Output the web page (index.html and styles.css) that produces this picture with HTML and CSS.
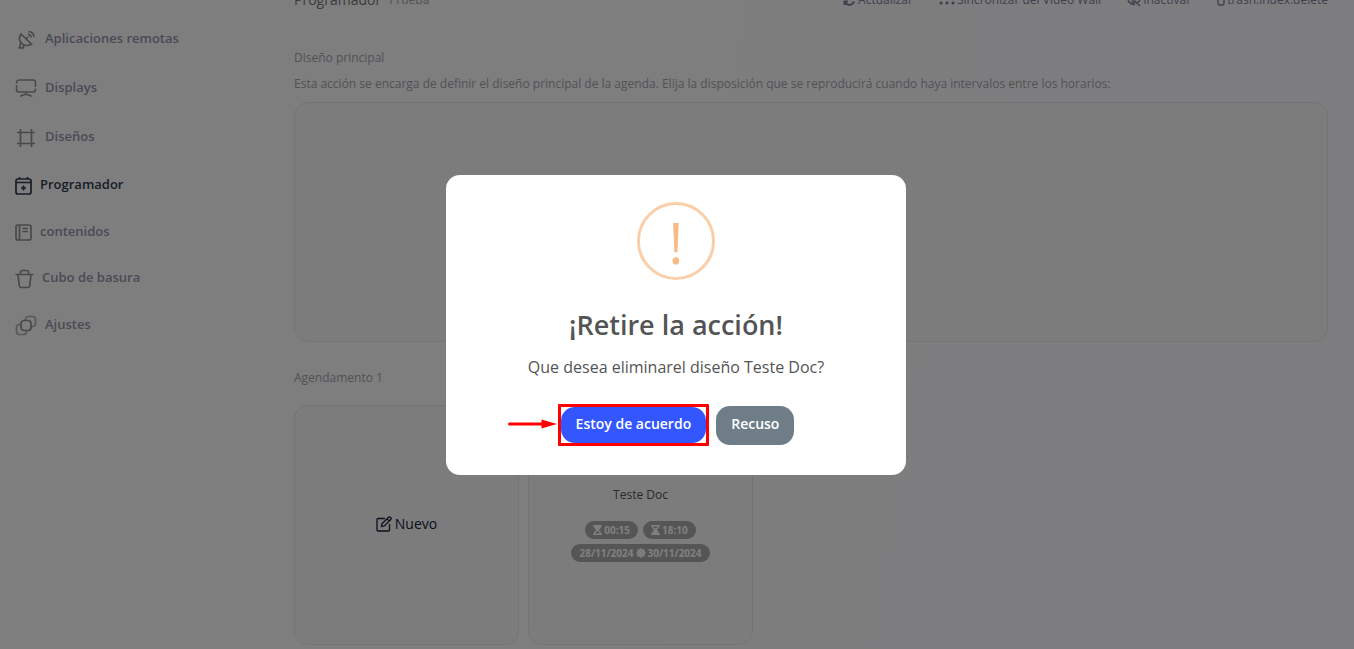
FILE: index.html
```html
<!DOCTYPE html>
<html lang="es">

<head>
  <meta charset="UTF-8" />
  <meta name="viewport" content="width=device-width, initial-scale=1.0" />
  <title>Programador</title>
  <link rel="stylesheet" href="styles.css">
</head>

<body>
  <div class="layout">
    <!-- sidebar -->
    <nav class="sidebar">
      <ul>
        <li class="item" aria-hidden="true">
          <svg class="icon" width="22" height="22" viewBox="0 0 22 22"><rect x="2" y="2" width="5" height="6" rx="1" /><rect x="11" y="2" width="5" height="6" rx="1" /><rect x="2" y="12" width="5" height="6" rx="1" /><rect x="11" y="12" width="5" height="6" rx="1" /></svg>
        </li>
        <li class="item">
          <a href="#">
            <svg class="icon" width="22" height="22" viewBox="0 0 22 22"><path d="M6 5C4 8 4 11.500 6.300 14s6.500 3.200 10.200 1.200zM11 10l2-2.200M5.800 13.500L4.500 18.500M3.500 18.800H9M8.500 16v2.500M13 5.300c1.700.2 2.900 1.500 3.200 3.200M13.500 2.500c3 .2 5.200 2.400 5.500 5.500" /></svg>
            Aplicaciones remotas
          </a>
        </li>
        <li class="item">
          <a href="#">
            <svg class="icon thin" width="22" height="22" viewBox="0 0 22 22"><path d="M1.500 5.500V4.500a2.500 2.500 0 0 1 2.500-2.500h14A2.500 2.500 0 0 1 20.500 4.500v4.500M20.500 10.500v1a2.500 2.500 0 0 1-2.500 2.500H4A2.500 2.500 0 0 1 1.500 11.500V7M11 14v2M5 18.500c1.500-1.200 3.500-1.800 6-2.300 2.500.5 4.500 1.100 6 2.300" /></svg>
            Displays
          </a>
        </li>
        <li class="item">
          <a href="#">
            <svg class="icon" width="22" height="22" viewBox="0 0 22 22"><path d="M5.500 2v18M16.500 2v18M2 5.500h18M2 16.500h18" /></svg>
            Diseños
          </a>
        </li>
        <li class="item small active">
          <a href="#">
            <svg class="icon" width="17" height="19" viewBox="0 0 17 19"><rect x="1" y="3" width="15" height="15" rx="2" /><path d="M1 6.500h15M4.500 1v2M12.500 1v2M8.500 9.500v5M6 12h5" /></svg>
            Programador
          </a>
        </li>
        <li class="item small">
          <a href="#">
            <svg class="icon" width="17" height="17" viewBox="0 0 17 17"><rect x="1" y="1" width="15" height="15" rx="2" /><path d="M4.500 1v15M7.500 4.500H13M7.500 7.500H13" /></svg>
            contenidos
          </a>
        </li>
        <li class="item medium">
          <a href="#">
            <svg class="icon" width="19" height="20" viewBox="0 0 19 20"><path d="M.5 5.500h18M3 5.500l1.300 11.300A2 2 0 0 0 6.300 18.500h6.400a2 2 0 0 0 2-1.700L16 5.500M5.500 5.500V3.200A1.700 1.700 0 0 1 7.200 1.500h4.600a1.700 1.700 0 0 1 1.700 1.700v2.300" /></svg>
            Cubo de basura
          </a>
        </li>
        <li class="item">
          <a href="#">
            <svg class="icon" width="22" height="22" viewBox="0 0 22 22"><rect x="6" y="5.500" width="10" height="10" rx="3" /><path class="faint" d="M10.500 5.500V4.500a3 3 0 0 1 3-3h4a3 3 0 0 1 3 3v4a3 3 0 0 1-3 3H16M6 9.500H4.500a3 3 0 0 0-3 3v4a3 3 0 0 0 3 3h4a3 3 0 0 0 3-3v-1" /></svg>
            Ajustes
          </a>
        </li>
      </ul>
    </nav>

    <!-- content -->
    <main class="main">
      <header class="topbar">
        <h1>Programador</h1>
        <span class="crumb">Prueba</span>
        <div class="actions">
          <a href="#">
            <svg class="bold" width="13" height="13" viewBox="0 0 13 13"><path d="M11.500 1.500v3.500H8M1.500 11V7.500H5M2 5a5 5 0 0 1 9-1M11 7.500a5 5 0 0 1-9 1" /></svg>
            Actualizar
          </a>
          <a href="#">
            <svg class="solid" width="16" height="13" viewBox="0 0 16 13"><circle cx="2" cy="9" r="1.600" /><circle cx="8" cy="9" r="1.600" /><circle cx="14" cy="9" r="1.600" /><circle cx="8" cy="3" r="1.600" /></svg>
            Sincronizar del Video Wall
          </a>
          <a href="#">
            <svg width="14" height="13" viewBox="0 0 14 13"><path d="M1 6.500C3 3.500 5 2.500 7 2.500s4 1 6 4M1 6.500c2 3 4 4.300 7 4M5 6.500a2 2 0 0 0 3 2M1.500 1l11.500 11M10 9l3-2.500" /></svg>
            Inactivar
          </a>
          <a href="#">
            <svg width="8" height="13" viewBox="0 0 8 13"><path d="M1 3v6.500a1.500 1.500 0 0 0 1.500 1.500h3A1.500 1.500 0 0 0 7 9.500V3" /></svg>
            trash.index.delete
          </a>
        </div>
      </header>

      <section class="section">
        <h2>Diseño principal</h2>
        <p class="desc">Esta acción se encarga de definir el diseño principal de la agenda. Elija la disposición que se reproducirá cuando haya intervalos entre los horarios:</p>
        <div class="card"></div>
      </section>

      <section class="section agenda">
        <h2>Agendamento 1</h2>
        <div class="cards">
          <div class="card new">
            <a href="#">
              <svg width="16" height="16" viewBox="0 0 16 16"><path d="M9 2.500H2A1 1 0 0 0 1 3.500V14a1 1 0 0 0 1 1h10.500a1 1 0 0 0 1-1V8M5.500 10.500l.5-2.800 6.500-6.500a1.200 1.200 0 0 1 1.700 0l.6.6a1.200 1.200 0 0 1 0 1.700L8.300 10zM11 2.800l2.300 2.300" /></svg>
              Nuevo
            </a>
          </div>
          <div class="card layout-card">
            <h3>Teste Doc</h3>
            <div class="badges">
              <span class="badge">
                <svg width="9" height="10" viewBox="0 0 9 10"><path d="M0 0h9v1.500H8C8 3.500 6.500 4.300 5.500 5 6.500 5.700 8 6.500 8 8.500h1V10H0V8.500h1C1 6.500 2.500 5.700 3.500 5 2.500 4.300 1 3.500 1 1.500H0z" /><path class="sand" d="M4.500 6C3.500 6.600 2.600 7.300 2.400 8.500h4.200C6.400 7.300 5.500 6.600 4.500 6z" /></svg>
                00:15
              </span>
              <span class="badge">
                <svg width="9" height="10" viewBox="0 0 9 10"><path d="M0 0h9v1.500H8C8 3.500 6.500 4.300 5.500 5 6.500 5.700 8 6.500 8 8.500h1V10H0V8.500h1C1 6.500 2.500 5.700 3.500 5 2.500 4.300 1 3.500 1 1.500H0z" /><path class="sand" d="M2.400 1.500C2.500 2.500 3 3 3.300 3.300h2.400C6 3 6.500 2.500 6.600 1.500z" /></svg>
                18:10
              </span>
              <span class="badge">
                28/11/2024
                <svg width="10" height="10" viewBox="0 0 10 10"><g fill="none" stroke="#fff"><circle cx="5" cy="5" r="3.200" stroke-width="1.500" /><path d="M5 0v10M0 5h10M1.500 1.500l7 7M8.500 1.500l-7 7" stroke-width="1.200" /></g></svg>
                30/11/2024
              </span>
            </div>
          </div>
        </div>
      </section>
    </main>
  </div>

  <!-- confirm dialog -->
  <div class="overlay">
    <div class="modal" role="dialog" aria-modal="true" aria-labelledby="modal-title">
      <div class="modal-icon">!</div>
      <h2 class="modal-title" id="modal-title">¡Retire la acción!</h2>
      <p class="modal-text">Que desea eliminarel diseño Teste Doc?</p>
      <div class="modal-actions">
        <div class="highlight">
          <svg class="arrow" width="49" height="10" viewBox="0 0 49 10"><path d="M1.500 5H36" stroke="#f00" stroke-width="3" stroke-linecap="round" /><path d="M33.500.5L49 5 33.500 9.500z" fill="#f00" stroke="none" /></svg>
          <button type="button" class="btn btn-confirm">Estoy de acuerdo</button>
        </div>
        <button type="button" class="btn btn-cancel">Recuso</button>
      </div>
    </div>
  </div>
</body>

</html>
```
FILE: styles.css
```css
* {
  margin: 0;
  padding: 0;
  box-sizing: border-box;
}

body {
  height: 100vh;
  overflow: hidden;
  font-family: "Open Sans", "Noto Sans", sans-serif;
  font-size: 12px;
  line-height: 20px;
  color: #a5a5ac;
  background: linear-gradient(100deg, #fcfcfc 50%, #fbfaff 80%);
}

ul {
  list-style: none;
}

a {
  color: inherit;
  text-decoration: none;
}

svg {
  flex-shrink: 0;
  fill: none;
  stroke: currentColor;
}

.layout {
  display: flex;
}

/* sidebar */
.sidebar {
  width: 268px;
  padding-left: 15px;
  margin-top: -36px;
  font-size: 13px;
  font-weight: 600;
  color: #9495aa;
}

.item,
.item a {
  display: flex;
  align-items: center;
  gap: 8px;
}

.item {
  height: 49px;
}

.item.small {
  height: 47px;
}

.item.medium {
  height: 45px;
}

.icon {
  margin-top: 4px;
  color: #929292;
  stroke-width: 1.700;
}

.icon.thin {
  stroke-width: 1.500;
}

.icon .faint {
  opacity: 0.7;
}

.active,
.active .icon {
  color: #303a4c;
}

/* content */
.main {
  flex: 1;
  min-width: 0;
  padding: 0 26px;
  margin-top: -10px;
}

.topbar {
  display: flex;
  align-items: center;
}

.topbar h1 {
  font-size: 14px;
  font-weight: 400;
  color: #77777c;
}

.topbar .crumb {
  margin-left: 8px;
}

.actions {
  display: flex;
  gap: 26px;
  margin-left: auto;
  color: #7f8198;
}

.actions a {
  display: flex;
  align-items: center;
  gap: 2px;
}

.actions svg {
  stroke-width: 1.400;
}

.actions .bold {
  stroke-width: 2;
}

.actions .solid {
  fill: currentColor;
  stroke: none;
}

.section {
  margin-top: 38px;
}

.section h2 {
  font-size: 12px;
  font-weight: 400;
}

.desc {
  margin-top: 6px;
  margin-bottom: 8px;
}

.card {
  height: 240px;
  border: 1px solid #e9e9e9;
  border-radius: 14px;
  background: #f8f8f8;
}

.agenda {
  margin-top: 26px;
}

.cards {
  display: flex;
  gap: 9px;
  margin-top: 17px;
}

.cards .card {
  width: 225px;
}

.new {
  display: flex;
  align-items: center;
  justify-content: center;
  padding-bottom: 2px;
  font-size: 14px;
  color: #1c1c3c;
}

.new a {
  display: flex;
  align-items: center;
  gap: 3px;
}

.new svg {
  stroke-width: 1.300;
}

.layout-card {
  padding: 79px 30px 0;
  text-align: center;
}

.layout-card h3 {
  font-size: 12px;
  font-weight: 400;
  color: #55555a;
}

.badges {
  display: flex;
  flex-wrap: wrap;
  justify-content: center;
  gap: 5px;
  margin-top: 16px;
}

.badge {
  display: flex;
  align-items: center;
  gap: 2px;
  padding: 0 8px;
  border-radius: 10px;
  font-size: 10px;
  font-weight: 700;
  line-height: 18px;
  color: #fff;
  background: #aaa;
}

.badge svg {
  fill: #fff;
  stroke: none;
}

.badge .sand {
  fill: #aaa;
}

/* dialog */
.overlay {
  position: fixed;
  inset: 0;
  display: flex;
  align-items: center;
  justify-content: center;
  padding: 1px 2px 0 0;
  background: rgba(0, 0, 0, 0.5);
}

.modal {
  display: flex;
  flex-direction: column;
  align-items: center;
  width: 460px;
  padding: 27px 20px 29px;
  border-radius: 14px;
  color: #545454;
  background: #fff;
}

.modal-icon {
  width: 78px;
  height: 78px;
  border: 3px solid #facea8;
  border-radius: 50%;
  font-size: 56px;
  line-height: 74px;
  text-align: center;
  color: #f8bb86;
}

.modal-title {
  margin-top: 27px;
  font-size: 27px;
  font-weight: 600;
  line-height: 36px;
}

.modal-text {
  margin-top: 12px;
  font-size: 16px;
  line-height: 24px;
}

.modal-actions {
  display: flex;
  align-items: center;
  gap: 7px;
  margin-top: 25px;
}

.highlight {
  position: relative;
  border: 3px solid #f00;
  border-radius: 1px;
}

.arrow {
  position: absolute;
  right: 100%;
  top: 12px;
  margin-right: 4px;
}

.btn {
  display: block;
  padding: 0 15px 3px;
  border: none;
  border-radius: 14px;
  font-family: inherit;
  font-size: 14px;
  font-weight: 600;
  color: #fff;
  cursor: pointer;
}

.btn-confirm {
  height: 36px;
  background: #3356ff;
}

.btn-cancel {
  height: 39px;
  background: #6e7d88;
}
```
